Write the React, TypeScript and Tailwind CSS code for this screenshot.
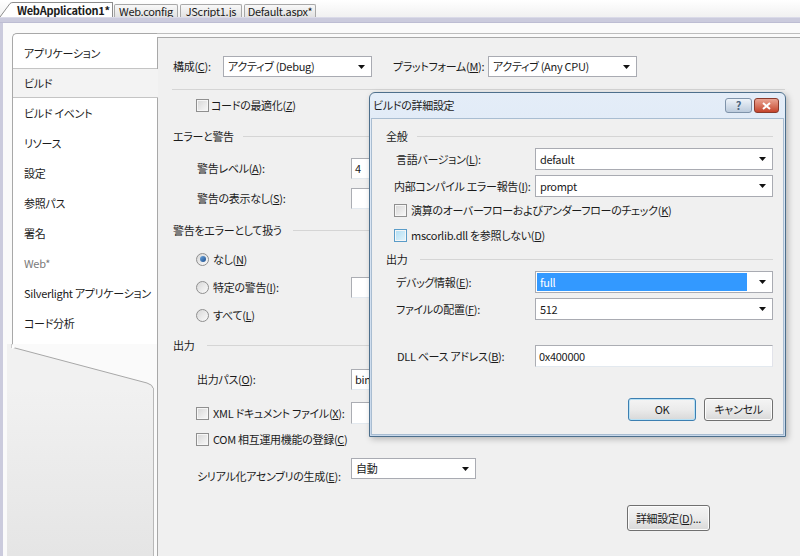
import React from "react";

const U = ({ c }: { c: string }) => <span className="underline">{c}</span>;

const Arrow = () => (
  <svg width="7" height="4" viewBox="0 0 7 4" className="shrink-0">
    <path d="M0 0H7L3.5 4Z" fill="#111" />
  </svg>
);

const Combo = ({ w, children, hl }: { w: string; children: React.ReactNode; hl?: boolean }) => (
  <div className={`flex h-full items-center border border-[#a9abb2] bg-white pr-[6px] ${w}`}>
    <div className="flex h-full flex-1 items-center p-[1px]">
      <div className={`flex h-full flex-1 items-center pl-[3px] ${hl ? "mr-[11px] bg-[#3399ff] text-white" : ""}`}>
        {children}
      </div>
    </div>
    <Arrow />
  </div>
);

const Box = ({ w, children }: { w: string; children?: React.ReactNode }) => (
  <div className={`flex h-full items-center border border-[#abadb3] border-b-[#e3e9ef] border-r-[#e2e3ea] bg-white pl-[3px] ${w}`}>
    {children}
  </div>
);

const Check = ({ hover }: { hover?: boolean }) => (
  <span
    className={`inline-block h-[13px] w-[13px] shrink-0 border shadow-[inset_0_0_0_1px_#f6f6f6] ${
      hover
        ? "border-[#5a9cc8] bg-gradient-to-br from-[#aedcf2] to-[#e4f5fc]"
        : "border-[#8f8f8f] bg-gradient-to-br from-[#d6d6d6] to-[#f9f9f9]"
    }`}
  />
);

const Radio = ({ on }: { on?: boolean }) => (
  <span className="flex h-[13px] w-[13px] shrink-0 items-center justify-center rounded-full border border-[#8f8f8f] bg-gradient-to-br from-[#d8d8d8] to-[#fbfbfb]">
    {on && <span className="h-[6px] w-[6px] rounded-full bg-gradient-to-br from-[#6ea6dc] to-[#1c4f8f]" />}
  </span>
);

const Header = ({ children, gap }: { children: React.ReactNode; gap: string }) => (
  <div className={`flex h-[20px] items-center ${gap}`}>
    <span>{children}</span>
    <div className="h-px flex-1 bg-[#d5d5d5]" />
  </div>
);

const Btn = ({ w, h, children, focus }: { w: string; h: string; children: React.ReactNode; focus?: boolean }) => (
  <div
    className={`flex items-center justify-center rounded-[3px] border bg-gradient-to-b from-[#f4f4f4] via-[#ebebeb] to-[#d8d8d8] ${w} ${h} ${
      focus ? "border-[#3c7fb1] shadow-[inset_0_0_0_1px_#b8e1f5]" : "border-[#707070] shadow-[inset_0_0_0_1px_#fcfcfc]"
    }`}
  >
    {children}
  </div>
);

const sideItems = ["ビルド イベント", "リソース", "設定", "参照パス", "署名", "Web*", "Silverlight アプリケーション", "コード分析"];

export default function App() {
  return (
    <div className="relative flex h-[556px] w-[800px] flex-col overflow-hidden whitespace-nowrap bg-white font-['Noto_Sans_CJK_JP',sans-serif] text-[11px] leading-none tracking-[-0.3px] text-[#1b1b1b] [font-feature-settings:'palt']">
      {/* document tabs */}
      <div className="flex h-[17px] items-end bg-gradient-to-b from-[#ffffff] to-[#f1f1f1] text-[11px]">
        <svg width="14" height="15" viewBox="0 0 14 15" className="shrink-0">
          <path d="M0 15 L10 1.5 Q11 0.5 13 0.5 L14 0.5 L14 15 Z" fill="#fff" />
          <path d="M0 15 L10 1.5 Q11 0.5 13 0.5 L14 0.5" fill="none" stroke="#8c8c8c" />
        </svg>
        <div className="flex h-[15px] w-[99px] items-center border-r border-t border-[#8c8c8c] bg-white pl-[3px] font-bold">
          WebApplication1*
        </div>
        <div className="ml-[1px] flex h-[13px] w-[64px] items-center justify-center rounded-t-[2px] border border-b-0 border-[#a8a8a8] bg-gradient-to-b from-[#f8f8f8] to-[#e2e2e2]">
          Web.config
        </div>
        <div className="ml-[2px] flex h-[13px] w-[62px] items-center justify-center rounded-t-[2px] border border-b-0 border-[#a8a8a8] bg-gradient-to-b from-[#f8f8f8] to-[#e2e2e2]">
          JScript1.js
        </div>
        <div className="ml-[2px] flex h-[13px] w-[72px] items-center justify-center rounded-t-[2px] border border-b-0 border-[#a8a8a8] bg-gradient-to-b from-[#f8f8f8] to-[#e2e2e2]">
          Default.aspx*
        </div>
      </div>
      <div className="h-[6px] border-b border-t border-b-[#bdbdd3] border-t-[#dadae8] bg-[#cbcbdd]" />

      <div className="flex flex-1 border-l-[3px] border-[#cbcbdd] bg-[#fafafa] pt-[10px]">
        {/* left nav */}
        <div className="flex w-[154px] shrink-0 flex-col">
          <div className="relative z-10 ml-[9px] w-[145px] rounded-tl-[5px] border-l border-t border-[#a8a8a8] bg-white">
            <div className="flex h-[35px] items-center border-b border-[#c4c4c4] pl-[11px] pt-[4px]">アプリケーション</div>
            <div className="-mr-px flex h-[29px] items-center border-b border-[#c4c4c4] bg-[#f3f3f3] pl-[11px]">ビルド</div>
            {sideItems.map((s) => (
              <div key={s} className={`flex h-[30px] items-center pl-[11px] ${s === "Web*" ? "text-[#7a7a7a]" : ""}`}>
                {s}
              </div>
            ))}
            <div className="h-[6px]" />
          </div>
          <svg width="154" height="44" viewBox="0 0 154 44" className="shrink-0">
            <path d="M4 0 L9 0 L9 1 Q9 3 12 4 L144 39 Q150 41 150 44 L4 44 Z" fill="#f1f1f1" />
            <path d="M9 0 L9 4 Q9 3 12 4 L144 39 Q150 41 150 44" fill="none" stroke="#a8a8a8" />
            <path d="M9 0 L9 5 L12 4 Z" fill="#fff" />
          </svg>
          <div className="ml-[4px] w-[147px] flex-1 border-r border-[#b8b8b8] bg-gradient-to-b from-[#f1f1f1] to-[#e5e5e5]" />
        </div>

        {/* content */}
        <div className="flex flex-1 flex-col border-t border-[#bdbdbd] pt-[3px]">
          <div className="flex flex-1 flex-col border-l border-t border-[#a8a8a8] bg-[#f0f0f0] pl-[15px] pr-[15px]">
            <div className="mt-[18px] flex h-[21px] items-center">
              <span className="w-[50px]">
                構成(<U c="C" />):
              </span>
              <Combo w="w-[149px]">アクティブ (Debug)</Combo>
              <span className="ml-[21px] w-[95px]">
                プラットフォーム(<U c="M" />):
              </span>
              <Combo w="w-[149px]">アクティブ (Any CPU)</Combo>
            </div>
            <div className="-ml-px mt-[12px] h-px bg-[#d5d5d5]" />
            <div className="mt-[5px] flex h-[20px] items-center gap-[2px] pl-[23px]">
              <Check />
              <span>
                コードの最適化(<U c="Z" />)
              </span>
            </div>
            <div className="mt-[11px]">
              <Header gap="gap-[9px]">エラーと警告</Header>
            </div>
            <div className="mt-[12px] flex h-[21px] items-center">
              <span className="w-[178px] pl-[24px]">
                警告レベル(<U c="A" />):
              </span>
              <Box w="w-[150px]">4</Box>
            </div>
            <div className="mt-[9px] flex h-[21px] items-center">
              <span className="w-[178px] pl-[24px]">
                警告の表示なし(<U c="S" />):
              </span>
              <Box w="w-[150px]" />
            </div>
            <div className="mt-[11px]">
              <Header gap="gap-[11px]">警告をエラーとして扱う</Header>
            </div>
            <div className="mt-[9px] flex h-[20px] items-center gap-[4px] pl-[23px]">
              <Radio on />
              <span>
                なし(<U c="N" />)
              </span>
            </div>
            <div className="mt-[8px] flex h-[21px] items-center">
              <div className="flex w-[178px] items-center gap-[4px] pl-[23px]">
                <Radio />
                <span>
                  特定の警告(<U c="I" />):
                </span>
              </div>
              <Box w="w-[150px]" />
            </div>
            <div className="mt-[7px] flex h-[20px] items-center gap-[4px] pl-[23px]">
              <Radio />
              <span>
                すべて(<U c="L" />)
              </span>
            </div>
            <div className="mt-[10px]">
              <Header gap="gap-[13px]">出力</Header>
            </div>
            <div className="mt-[14px] flex h-[21px] items-center">
              <span className="w-[178px] pl-[24px]">
                出力パス(<U c="O" />):
              </span>
              <Box w="w-[150px]">bin\</Box>
            </div>
            <div className="mt-[12px] flex h-[22px] items-center">
              <div className="flex w-[178px] items-center gap-[4px] pl-[23px]">
                <Check />
                <span>
                  XML ドキュメント ファイル(<U c="X" />):
                </span>
              </div>
              <Box w="w-[150px]" />
            </div>
            <div className="mt-[5px] flex h-[20px] items-center gap-[4px] pl-[23px]">
              <Check />
              <span>
                COM 相互運用機能の登録(<U c="C" />)
              </span>
            </div>
            <div className="mt-[9px] flex h-[21px] items-center">
              <span className="w-[178px] pl-[24px] pt-[16px]">
                シリアル化アセンブリの生成(<U c="E" />):
              </span>
              <Combo w="w-[125px]">自動</Combo>
            </div>
            <div className="ml-[454px] mt-[26px]">
              <Btn w="w-[83px]" h="h-[26px]">
                詳細設定(<U c="D" />)...
              </Btn>
            </div>
          </div>
        </div>
      </div>

      {/* dialog */}
      <div className="absolute left-[369px] top-[92px] z-20 flex h-[345px] w-[417px] flex-col rounded-t-[6px] border border-[#4d6f8c] bg-gradient-to-b from-[#e4edf8] to-[#c9d9ec] shadow-[2px_2px_6px_rgba(0,0,0,0.25)]">
        <div className="flex h-[25px] shrink-0 items-center pl-[3px] pr-[6px]">
          <span>ビルドの詳細設定</span>
          <div className="ml-auto flex gap-[2px]">
            <div className="flex h-[15px] w-[27px] items-center justify-center rounded-[3px] border border-[#7f93aa] bg-gradient-to-b from-[#eef3f9] to-[#bccbdc] text-[11px] font-bold text-[#4d6580]">
              ?
            </div>
            <div className="flex h-[15px] w-[25px] items-center justify-center rounded-[3px] border border-[#8a3a2c] bg-gradient-to-b from-[#e9a493] to-[#c4432b]">
              <svg width="9" height="8" viewBox="0 0 9 8">
                <path d="M1 1 L8 7 M8 1 L1 7" stroke="#fff" strokeWidth="2" />
              </svg>
            </div>
          </div>
        </div>
        <div className="mx-[1px] mb-[1px] flex flex-1 flex-col border border-[#a9bdd1] bg-[#f0f0f0] pl-[14px] pr-[10px] pt-[7px]">
          <Header gap="gap-[10px]">全般</Header>
          <div className="mt-[2px] flex h-[22px] items-center">
            <span className="w-[149px] pl-[10px]">
              言語バージョン(<U c="L" />):
            </span>
            <Combo w="flex-1">default</Combo>
          </div>
          <div className="mt-[5px] flex h-[22px] items-center">
            <span className="w-[149px] pl-[8px]">
              内部コンパイル エラー報告(<U c="I" />):
            </span>
            <Combo w="flex-1">prompt</Combo>
          </div>
          <div className="mt-[2px] flex h-[22px] items-center gap-[4px] pl-[8px]">
            <Check />
            <span>
              演算のオーバーフローおよびアンダーフローのチェック(<U c="K" />)
            </span>
          </div>
          <div className="mt-[3px] flex h-[22px] items-center gap-[4px] pl-[8px]">
            <Check hover />
            <span>
              mscorlib.dll を参照しない(<U c="D" />)
            </span>
          </div>
          <div className="mt-[3px]">
            <Header gap="gap-[13px]">出力</Header>
          </div>
          <div className="mt-[2px] flex h-[22px] items-center">
            <span className="w-[149px] pl-[10px]">
              デバッグ情報(<U c="E" />):
            </span>
            <Combo w="flex-1" hl>
              full
            </Combo>
          </div>
          <div className="mt-[5px] flex h-[22px] items-center">
            <span className="w-[149px] pl-[10px]">
              ファイルの配置(<U c="F" />):
            </span>
            <Combo w="flex-1">512</Combo>
          </div>
          <div className="mt-[25px] flex h-[22px] items-center">
            <span className="w-[149px] pl-[11px]">
              DLL ベース アドレス(<U c="B" />):
            </span>
            <Box w="flex-1">0x400000</Box>
          </div>
          <div className="mt-[31px] flex justify-end gap-[8px]">
            <Btn w="w-[68px]" h="h-[23px]" focus>
              OK
            </Btn>
            <Btn w="w-[69px]" h="h-[23px]">
              キャンセル
            </Btn>
          </div>
        </div>
      </div>
    </div>
  );
}
